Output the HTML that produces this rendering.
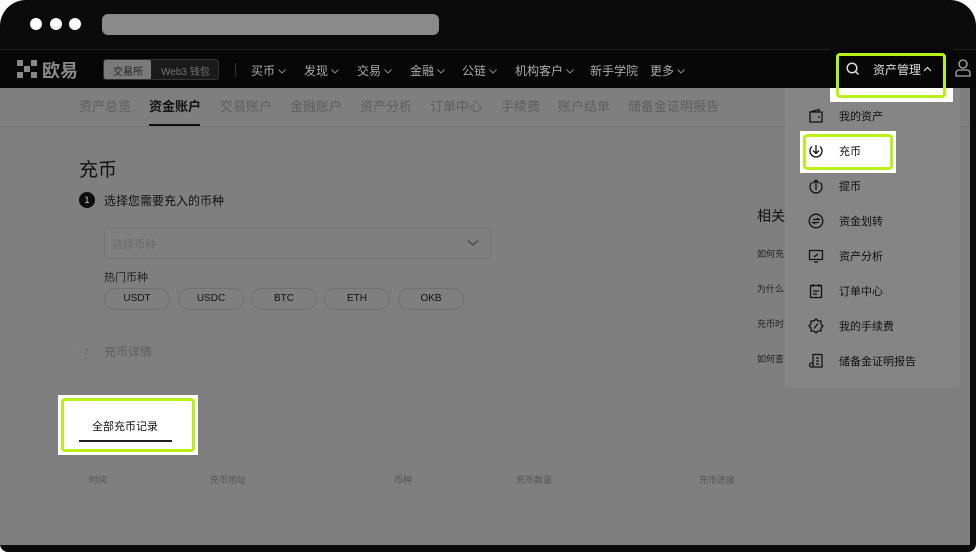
<!DOCTYPE html>
<html><head><meta charset="utf-8"><style>
*{margin:0;padding:0;box-sizing:border-box}
body{width:976px;height:552px;background:#fff;overflow:hidden;font-family:"Liberation Sans","Noto Sans CJK SC",sans-serif;position:relative}
.win{position:absolute;left:0;top:0;width:976px;height:552px;background:#0b0b0b;border-radius:26px 26px 8px 8px;overflow:hidden}
.abs{position:absolute}
.dot{position:absolute;top:18px;width:12px;height:12px;border-radius:50%;background:#fff}
.url{position:absolute;left:102px;top:14px;width:337px;height:21px;border-radius:6px;background:#8a8a8a}
.nav{position:absolute;left:0;top:49px;width:976px;height:39px;background:#070707;border-top:1px solid #222}
.nav span{position:absolute;top:12px;font-size:12px;color:#aaa}
.nav span svg{margin-left:3px;vertical-align:1px}
.content{position:absolute;left:0;top:88px;width:970px;height:457px;background:#7f7f7f}
.tabs span{position:absolute;top:8px;font-size:13px;color:#5f5f5f}
.t{position:absolute;color:#111}
.chip{position:absolute;top:288px;width:66px;height:22px;border:1px solid #707070;border-radius:11px;font-size:10px;color:#111;text-align:center;line-height:20px}
.dd{position:absolute;left:785px;top:88px;width:175px;height:300px;background:#858585;border-radius:0 0 6px 6px}
.dd .it{position:absolute;left:54px;font-size:11px;color:#111}
.ic{position:absolute;left:23px;width:16px;height:16px}
.hl{position:absolute;background:#fff}
.gr{position:absolute;border:3px solid #b8f01a;border-radius:4px}
.th{position:absolute;top:473px;font-size:9px;color:#555}
</style></head><body>
<svg width="0" height="0" style="position:absolute"><defs><symbol id="cv" viewBox="0 0 8 5"><path d="M0.5 0.5l3.5 3.5 3.5-3.5" fill="none" stroke="#888" stroke-width="1"/></symbol></defs></svg>
<div class="win">
<div class="dot" style="left:30px"></div><div class="dot" style="left:50px"></div><div class="dot" style="left:69px"></div>
<div class="url"></div>
<div class="nav">
 <svg class="abs" style="left:17px;top:10px" width="20" height="18" viewBox="0 0 20 18" fill="#888"><rect x="0" y="0" width="6" height="6"/><rect x="14" y="0" width="6" height="6"/><rect x="7" y="6" width="6" height="6"/><rect x="0" y="12" width="6" height="6"/><rect x="14" y="12" width="6" height="6"/></svg>
 <span style="left:42px;top:7px;font-size:18px;font-weight:bold;color:#8a8a8a">欧易</span>
 <div class="abs" style="left:103px;top:9px;width:116px;height:21px;border:1px solid #333;border-radius:3px;background:#1a1a1a"></div>
 <div class="abs" style="left:104px;top:10px;width:47px;height:19px;background:#7a7a7a;border-radius:2px"></div>
 <span style="left:113px;top:13px;font-size:10px;color:#222">交易所</span>
 <span style="left:161px;top:13px;font-size:10px;color:#777">Web3 钱包</span>
 <div class="abs" style="left:235px;top:13px;width:1px;height:14px;background:#333"></div>
 <span style="left:251px">买币<svg width="8" height="5"><use href="#cv"/></svg></span><span style="left:304px">发现<svg width="8" height="5"><use href="#cv"/></svg></span><span style="left:357px">交易<svg width="8" height="5"><use href="#cv"/></svg></span><span style="left:410px">金融<svg width="8" height="5"><use href="#cv"/></svg></span><span style="left:462px">公链<svg width="8" height="5"><use href="#cv"/></svg></span><span style="left:515px">机构客户<svg width="8" height="5"><use href="#cv"/></svg></span><span style="left:590px">新手学院</span><span style="left:650px">更多<svg width="8" height="5"><use href="#cv"/></svg></span>
</div>
<div class="content">
 <div class="tabs">
 <span style="left:79px">资产总览</span><span style="left:149px;color:#111;font-weight:bold">资金账户</span><span style="left:220px">交易账户</span><span style="left:290px">金融账户</span><span style="left:360px">资产分析</span><span style="left:430px">订单中心</span><span style="left:501px">手续费</span><span style="left:558px">账户结单</span><span style="left:628px">储备金证明报告</span>
 </div>
 <div class="abs" style="left:149px;top:36px;width:51px;height:2px;background:#111"></div>
 <div class="abs" style="left:0;top:38px;width:970px;height:1px;background:#747474"></div>
</div>
<div class="t" style="left:79px;top:155px;font-size:19px">充币</div>
<div class="abs" style="left:79px;top:192px;width:16px;height:16px;border-radius:50%;background:#0d0d0d;color:#ccc;font-size:9px;text-align:center;line-height:16px">1</div>
<div class="t" style="left:104px;top:192px;font-size:12px">选择您需要充入的币种</div>
<div class="abs" style="left:104px;top:228px;width:387px;height:31px;border:1px solid #747474;border-radius:3px"></div>
<div class="abs" style="left:112px;top:236px;font-size:11px;color:#6c6c6c">选择币种</div>
<svg class="abs" style="left:467px;top:239px" width="12" height="8" viewBox="0 0 12 8"><path d="M1 1.5l5 4.5 5-4.5" fill="none" stroke="#444" stroke-width="1.2"/></svg>
<div class="t" style="left:104px;top:269px;font-size:11px;color:#222">热门币种</div>
<div class="chip" style="left:104px">USDT</div><div class="chip" style="left:178px">USDC</div><div class="chip" style="left:251px">BTC</div><div class="chip" style="left:324px">ETH</div><div class="chip" style="left:398px">OKB</div>
<div class="abs" style="left:79px;top:344px;width:15px;height:15px;border:1px solid #7a7a7a;border-radius:50%;font-size:8px;color:#6a6a6a;text-align:center;line-height:13px">2</div>
<div class="abs" style="left:104px;top:343px;font-size:12px;color:#5f5f5f">充币详情</div>
<div class="t" style="left:757px;top:206px;font-size:14px">相关</div>
<div class="t" style="left:757px;top:247px;font-size:9px;color:#222">如何充</div>
<div class="t" style="left:757px;top:282px;font-size:9px;color:#222">为什么</div>
<div class="t" style="left:757px;top:317px;font-size:9px;color:#222">充币时</div>
<div class="t" style="left:757px;top:352px;font-size:9px;color:#222">如何查</div>
<div class="dd">
 <svg class="ic" style="top:20px" viewBox="0 0 16 16" fill="none" stroke="#111" stroke-width="1.3"><path d="M2 4h12v10H2z M2 4l9-2.5V4 M10 9h2"/></svg>
 <div class="it" style="top:20px">我的资产</div>
 <svg class="ic" style="top:55px" viewBox="0 0 16 16" fill="none" stroke="#111" stroke-width="1.3"><path d="M4 3.5A6 6 0 1 0 12 3.5 M8 2v8 M5 7.5l3 3 3-3"/></svg>
 <svg class="ic" style="top:90px" viewBox="0 0 16 16" fill="none" stroke="#111" stroke-width="1.3"><path d="M4 4.5A6 6 0 1 0 12 4.5 M8 12V2 M5 5l3-3 3 3"/></svg>
 <div class="it" style="top:90px">提币</div>
 <svg class="ic" style="top:125px" viewBox="0 0 16 16" fill="none" stroke="#111" stroke-width="1.3"><circle cx="8" cy="8" r="6.8"/><path d="M5 6.5h6l-2-1.5 M11 9.5H5l2 1.5"/></svg>
 <div class="it" style="top:125px">资金划转</div>
 <svg class="ic" style="top:160px" viewBox="0 0 16 16" fill="none" stroke="#111" stroke-width="1.3"><path d="M1.5 2.5h13v9h-13z M6 14h4 M6 9l4-3"/></svg>
 <div class="it" style="top:160px">资产分析</div>
 <svg class="ic" style="top:195px" viewBox="0 0 16 16" fill="none" stroke="#111" stroke-width="1.3"><path d="M2.5 2.5h11v12h-11z M5 1v3 M11 1v3 M5 8h6 M5 11h4"/></svg>
 <div class="it" style="top:195px">订单中心</div>
 <svg class="ic" style="top:230px" viewBox="0 0 16 16" fill="none" stroke="#111" stroke-width="1.3"><path d="M8 1l2 2h3v3l2 2-2 2v3h-3l-2 2-2-2H3v-3L1 8l2-2V3h3z M6 10.5l4-5"/></svg>
 <div class="it" style="top:230px">我的手续费</div>
 <svg class="ic" style="top:265px" viewBox="0 0 16 16" fill="none" stroke="#111" stroke-width="1.3"><path d="M5 14V1.5h9V14H3.5a2 2 0 0 1 0-4H5 M8 5h3 M8 8h3 M8 11h3"/></svg>
 <div class="it" style="top:265px">储备金证明报告</div>
</div>
<div class="hl" style="left:830px;top:49px;width:123px;height:53px;background:linear-gradient(#070707 0,#070707 39px,#fff 39px)"></div>
<div class="gr" style="left:836px;top:53px;width:110px;height:45px"></div>
<svg class="abs" style="left:846px;top:62px" width="14" height="14" viewBox="0 0 14 14" fill="none" stroke="#ddd" stroke-width="1.5"><circle cx="6" cy="6" r="4.8"/><path d="M9.5 9.5l3 3"/></svg>
<div class="abs" style="left:873px;top:61px;font-size:12px;color:#ddd">资产管理</div>
<svg class="abs" style="left:923px;top:66px" width="9" height="6" viewBox="0 0 9 6"><path d="M1 5l3.5-3.5 3.5 3.5" fill="none" stroke="#ddd" stroke-width="1.2"/></svg>
<svg class="abs" style="left:955px;top:59px" width="16" height="18" viewBox="0 0 16 18" fill="none" stroke="#aaa" stroke-width="1.3"><circle cx="8" cy="5" r="4"/><path d="M1 17v-3a3 3 0 0 1 3-3h8a3 3 0 0 1 3 3v3z"/></svg>
<div class="hl" style="left:800px;top:131px;width:96px;height:42px"></div>
<div class="gr" style="left:803px;top:134px;width:90px;height:36px"></div>
<svg class="abs" style="left:808px;top:143px" width="16" height="16" viewBox="0 0 16 16" fill="none" stroke="#111" stroke-width="1.3"><path d="M4 3.5A6 6 0 1 0 12 3.5 M8 2v8 M5 7.5l3 3 3-3"/></svg>
<div class="abs" style="left:839px;top:143px;font-size:11px;color:#111">充币</div>
<div class="hl" style="left:58px;top:395px;width:140px;height:60px"></div>
<div class="gr" style="left:61px;top:398px;width:134px;height:54px"></div>
<div class="abs" style="left:92px;top:418px;font-size:11px;color:#111">全部充币记录</div>
<div class="abs" style="left:79px;top:440px;width:93px;height:2px;background:#222"></div>
<div class="th" style="left:89px">时间</div><div class="th" style="left:210px">充币地址</div><div class="th" style="left:394px">币种</div><div class="th" style="left:516px">充币数量</div><div class="th" style="left:699px">充币进度</div>
</div>
</body></html>
